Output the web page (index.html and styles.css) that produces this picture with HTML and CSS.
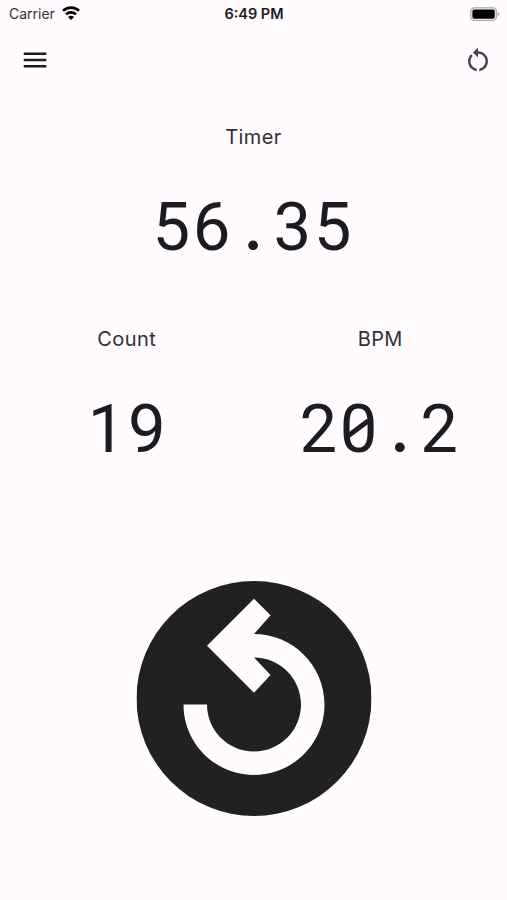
FILE: index.html
```html
<!DOCTYPE html>
<html lang="en">
<head>
  <meta charset="UTF-8" />
  <meta name="viewport" content="width=device-width, initial-scale=1.0"/>
  <title>Timer</title>
  <link rel="stylesheet" href="styles.css">
</head>
<body>

  <div class="status-bar">
    <div class="carrier">
      <span>Carrier</span>
      <svg class="wifi" viewBox="0 0 18 14" fill="none" stroke="#000" stroke-width="2.7">
        <path d="M1 4.9a11.4 11.4 0 0 1 16 0"/>
        <path d="M4 8.4a7.1 7.1 0 0 1 10 0"/>
        <path d="M9 14L6 11a4.2 4.2 0 0 1 6 0z" fill="#000" stroke="none"/>
      </svg>
    </div>
    <div class="clock">6:49 PM</div>
    <svg class="battery" viewBox="0 0 30 14">
      <rect x=".8" y=".8" width="25.6" height="12.6" rx="3.6" fill="#fffbff" stroke="#aaa8aa" stroke-width="1.3"/>
      <rect x="2.4" y="2.4" width="22.4" height="9.4" rx="1.8" fill="#000"/>
      <path d="M27.6 4.9q2 .6 2 2.2t-2 2.2z" fill="#aaa8aa"/>
    </svg>
  </div>

  <header class="app-bar">
    <button class="icon-button" aria-label="Menu">
      <svg viewBox="0 0 24 24" fill="#1c1b1f"><path d="M3 18h18v-2H3v2zm0-5h18v-2H3v2zm0-7v2h18V6H3z"/></svg>
    </button>
    <button class="icon-button" aria-label="Reset">
      <svg viewBox="0 0 24 24" fill="#49454f"><path d="M12 5V2L8 6l4 4V7c3.31 0 6 2.69 6 6 0 2.97-2.17 5.43-5 5.91v2.02c3.95-.49 7-3.85 7-7.93 0-4.42-3.58-8-8-8zm-6 8c0-1.65.67-3.15 1.76-4.24L6.34 7.34C4.9 8.79 4 10.79 4 13c0 4.08 3.05 7.44 7 7.93v-2.02c-2.83-.48-5-2.94-5-5.91z"/></svg>
    </button>
  </header>

  <main>
    <section class="readout timer">
      <h2>Timer</h2>
      <p class="digits"><span>5</span><span>6</span><span class="dot">.</span><span>3</span><span>5</span></p>
    </section>

    <div class="row">
      <section class="readout count">
        <h2>Count</h2>
        <p class="digits"><span>1</span><span>9</span></p>
      </section>
      <section class="readout">
        <h2>BPM</h2>
        <p class="digits"><span>2</span><span class="zero">0</span><span class="dot">.</span><span>2</span></p>
      </section>
    </div>

    <button class="tap" aria-label="Tap">
      <svg viewBox="2 2 20 20">
        <circle cx="12" cy="12" r="10" fill="#212121"/>
        <path fill="#fffbff" d="M12 18.5c-3.31 0-6-2.69-6-6h2c0 2.21 1.79 4 4 4s4-1.79 4-4-1.79-4-4-4l1.41 1.5L12 11.5l-4-4 4-4 1.41 1.41L12 6.5c3.31 0 6 2.69 6 6s-2.69 6-6 6z"/>
      </svg>
    </button>
  </main>

</body>
</html>
```
FILE: styles.css
```css
* {
  box-sizing: border-box;
}

body {
  margin: 0;
  height: 900px;
  overflow: hidden;
  background: #fffbff;
  color: #1c1b1f;
  font-family: Inter, sans-serif;
}

button {
  display: block;
  padding: 0;
  border: none;
  background: none;
  cursor: pointer;
}

svg {
  display: block;
}

/* Status bar */
.status-bar {
  display: grid;
  grid-template-columns: 1fr auto 1fr;
  align-items: center;
  height: 27px;
  padding: 0 7px 0 9px;
  font-size: 14px;
}

.carrier {
  display: flex;
  align-items: center;
  gap: 7px;
  color: #333;
}

.wifi {
  width: 18px;
  height: 14px;
  margin-top: -2px;
}

.clock {
  margin-right: 1px;
  font-size: 14.5px;
  font-weight: 600;
}

.battery {
  width: 30px;
  height: 14px;
  justify-self: end;
}

/* App bar */
.app-bar {
  display: flex;
  justify-content: space-between;
  height: 65px;
  padding: 18px 14px 0 20px;
}

.icon-button,
.icon-button svg {
  width: 30px;
  height: 30px;
}

/* Readouts */
.readout {
  flex: 1;
  text-align: center;
}

.timer {
  padding-top: 33px;
  height: 202px;
}

.row {
  display: flex;
  padding-top: 33px;
  height: 287px;
}

.readout h2 {
  margin: 0;
  font-size: 20px;
  line-height: 24px;
  font-weight: 400;
  letter-spacing: 0.4px;
  color: #303034;
}

.digits {
  display: flex;
  justify-content: center;
  margin: 38px 0 0;
  padding-right: 3px;
  font-family: Roboto, sans-serif;
  font-size: 67px;
  line-height: 80px;
}

.count .digits {
  padding-right: 0;
}

/* every character sits in a cell of the same width */
.digits span {
  width: 40.3px;
}

/* round decimal point */
.digits .dot {
  padding-left: 2px;
  font-family: Lato, sans-serif;
  font-size: 64px;
  line-height: 77px;
  font-weight: 700;
}

.zero {
  position: relative;
}

/* slash through the zero */
.zero::after {
  content: "";
  position: absolute;
  left: 7px;
  top: 37px;
  width: 26px;
  height: 5px;
  background: #1c1b1f;
  transform: rotate(-37deg);
}

/* Tap button */
.tap {
  width: 235px;
  height: 235px;
  margin: 0 auto;
  transform: translateX(0.5px);
}
```
